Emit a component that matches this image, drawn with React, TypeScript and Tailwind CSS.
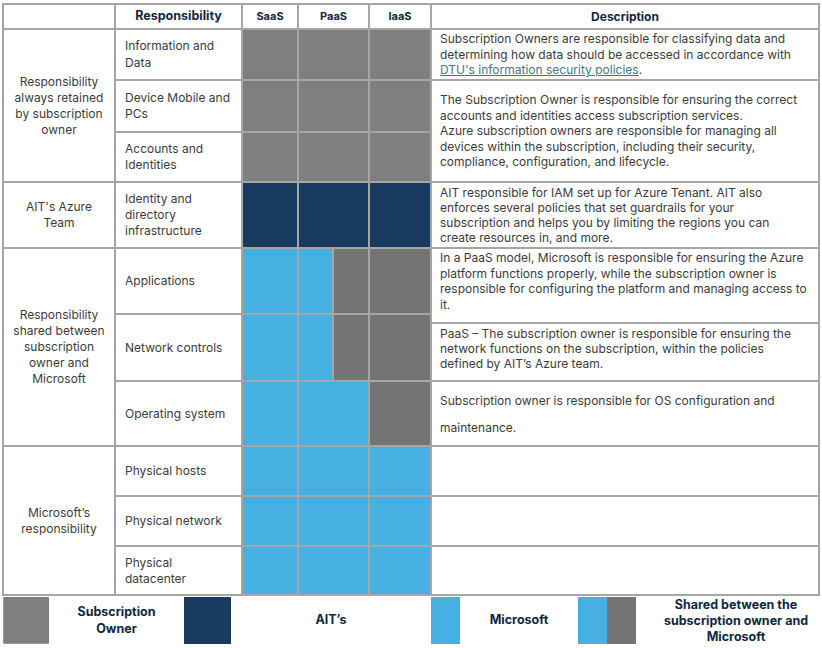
import React from "react";

const font = { fontFamily: "Inter, 'Liberation Sans', sans-serif" };

const txt = "text-[12px] text-[#3b3b3b]";
const head = "flex items-center justify-center bg-white font-bold text-[#0e2841]";

const Lines = ({ lines, className = "" }: { lines: React.ReactNode[]; className?: string }) => (
  <div className={className}>
    {lines.map((l, i) => (
      <div key={i} className="whitespace-nowrap">
        {l}
      </div>
    ))}
  </div>
);

export default function App() {
  return (
    <div className="w-[822px] h-[648px] bg-white" style={font}>
      <div className="ml-[2px] mt-[3px] grid w-[818px] grid-cols-[110px_125px_54px_69px_60px_386px] grid-rows-[23px_49px_50px_48px_64px_64px_7px_56px_63px_48px_48px_47px] gap-[2px] bg-[#a6a6a6] p-[2px]">
        {/* header */}
        <div className="col-start-1 row-start-1 bg-white" />
        <div className={`col-start-2 row-start-1 text-[12.5px] ${head}`}>Responsibility</div>
        <div className={`col-start-3 row-start-1 text-[11px] ${head}`}>SaaS</div>
        <div className={`col-start-4 row-start-1 text-[11px] ${head}`}>PaaS</div>
        <div className={`col-start-5 row-start-1 text-[11px] ${head}`}>IaaS</div>
        <div className={`col-start-6 row-start-1 text-[12px] ${head}`}>Description</div>

        {/* column 1 groups */}
        <div className={`col-start-1 row-start-2 row-span-3 flex items-center justify-center bg-white text-center leading-[16px] ${txt}`}>
          <Lines lines={["Responsibility", "always retained", "by subscription", "owner"]} />
        </div>
        <div className={`col-start-1 row-start-5 flex items-center justify-center bg-white text-center leading-[16px] ${txt}`}>
          <Lines lines={["AIT's Azure", "Team"]} />
        </div>
        <div className={`col-start-1 row-start-6 row-span-4 flex items-center justify-center bg-white text-center leading-[16px] ${txt}`}>
          <Lines lines={["Responsibility", "shared between", "subscription", "owner and", "Microsoft"]} />
        </div>
        <div className={`col-start-1 row-start-10 row-span-3 flex items-center justify-center bg-white text-center leading-[16px] ${txt}`}>
          <Lines lines={["Microsoft’s", "responsibility"]} />
        </div>

        {/* column 2 */}
        <div className={`col-start-2 row-start-2 flex items-center bg-white pl-[9px] leading-[16.5px] ${txt}`}>
          <Lines lines={["Information and", "Data"]} />
        </div>
        <div className={`col-start-2 row-start-3 flex items-center bg-white pl-[9px] leading-[16.5px] ${txt}`}>
          <Lines lines={["Device Mobile and", "PCs"]} />
        </div>
        <div className={`col-start-2 row-start-4 flex items-center bg-white pl-[9px] leading-[16px] ${txt}`}>
          <Lines lines={["Accounts and", "Identities"]} />
        </div>
        <div className={`col-start-2 row-start-5 flex items-center bg-white pl-[9px] leading-[16px] ${txt}`}>
          <Lines lines={["Identity and", "directory", "infrastructure"]} />
        </div>
        <div className={`col-start-2 row-start-6 flex items-center bg-white pl-[9px] ${txt}`}>Applications</div>
        <div className={`col-start-2 row-start-7 row-span-2 flex items-center bg-white pl-[9px] ${txt}`}>Network controls</div>
        <div className={`col-start-2 row-start-9 flex items-center bg-white pl-[9px] ${txt}`}>Operating system</div>
        <div className={`col-start-2 row-start-10 flex items-center bg-white pl-[9px] ${txt}`}>Physical hosts</div>
        <div className={`col-start-2 row-start-11 flex items-center bg-white pl-[9px] ${txt}`}>Physical network</div>
        <div className={`col-start-2 row-start-12 flex items-center bg-white pl-[9px] leading-[16px] ${txt}`}>
          <Lines lines={["Physical", "datacenter"]} />
        </div>

        {/* SaaS / PaaS / IaaS */}
        <div className="col-start-3 row-start-2 bg-[#7f7f7f]" />
        <div className="col-start-4 row-start-2 bg-[#7f7f7f]" />
        <div className="col-start-5 row-start-2 bg-[#7f7f7f]" />
        <div className="col-start-3 row-start-3 bg-[#7f7f7f]" />
        <div className="col-start-4 row-start-3 bg-[#7f7f7f]" />
        <div className="col-start-5 row-start-3 bg-[#7f7f7f]" />
        <div className="col-start-3 row-start-4 bg-[#7f7f7f]" />
        <div className="col-start-4 row-start-4 bg-[#7f7f7f]" />
        <div className="col-start-5 row-start-4 bg-[#7f7f7f]" />

        <div className="col-start-3 row-start-5 bg-[#173a5e]" />
        <div className="col-start-4 row-start-5 bg-[#173a5e]" />
        <div className="col-start-5 row-start-5 bg-[#173a5e]" />

        <div className="col-start-3 row-start-6 bg-[#45b0e1]" />
        <div className="col-start-4 row-start-6 flex gap-[2px]">
          <div className="w-[33px] bg-[#45b0e1]" />
          <div className="flex-1 bg-[#747474]" />
        </div>
        <div className="col-start-5 row-start-6 bg-[#747474]" />

        <div className="col-start-3 row-start-7 row-span-2 bg-[#45b0e1]" />
        <div className="col-start-4 row-start-7 row-span-2 flex gap-[2px]">
          <div className="w-[33px] bg-[#45b0e1]" />
          <div className="flex-1 bg-[#747474]" />
        </div>
        <div className="col-start-5 row-start-7 row-span-2 bg-[#747474]" />

        <div className="col-start-3 row-start-9 bg-[#45b0e1]" />
        <div className="col-start-4 row-start-9 bg-[#45b0e1]" />
        <div className="col-start-5 row-start-9 bg-[#747474]" />

        {[10, 11, 12].map((r) => (
          <React.Fragment key={r}>
            <div className="col-start-3 bg-[#45b0e1]" style={{ gridRowStart: r }} />
            <div className="col-start-4 bg-[#45b0e1]" style={{ gridRowStart: r }} />
            <div className="col-start-5 bg-[#45b0e1]" style={{ gridRowStart: r }} />
          </React.Fragment>
        ))}

        {/* descriptions */}
        <div className={`col-start-6 row-start-2 flex items-center bg-white pl-[8px] leading-[15.5px] ${txt}`}>
          <Lines
            lines={[
              "Subscription Owners are responsible for classifying data and",
              "determining how data should be accessed in accordance with",
              <>
                <span className="text-[#467886] underline">DTU's information security policies</span>.
              </>,
            ]}
          />
        </div>
        <div className={`col-start-6 row-start-3 row-span-2 flex items-center bg-white pl-[8px] leading-[15.5px] ${txt}`}>
          <Lines
            lines={[
              "The Subscription Owner is responsible for ensuring the correct",
              "accounts and identities access subscription services.",
              "Azure subscription owners are responsible for managing all",
              "devices within the subscription, including their security,",
              "compliance, configuration, and lifecycle.",
            ]}
          />
        </div>
        <div className={`col-start-6 row-start-5 flex items-center bg-white pl-[8px] leading-[15px] ${txt}`}>
          <Lines
            lines={[
              "AIT responsible for IAM set up for Azure Tenant. AIT also",
              "enforces several policies that set guardrails for your",
              "subscription and helps you by limiting the regions you can",
              "create resources in, and more.",
            ]}
          />
        </div>
        <div className={`col-start-6 row-start-6 row-span-2 bg-white pl-[8px] pt-[1px] leading-[15.5px] ${txt}`}>
          <Lines
            lines={[
              "In a PaaS model, Microsoft is responsible for ensuring the Azure",
              "platform functions properly, while the subscription owner is",
              "responsible for configuring the platform and managing access to",
              "it.",
            ]}
          />
        </div>
        <div className={`col-start-6 row-start-8 bg-white pl-[8px] pt-[2px] leading-[15px] ${txt}`}>
          <Lines
            lines={[
              "PaaS – The subscription owner is responsible for ensuring the",
              "network functions on the subscription, within the policies",
              "defined by AIT’s Azure team.",
            ]}
          />
        </div>
        <div className={`col-start-6 row-start-9 flex items-center bg-white pl-[8px] leading-[27px] ${txt}`}>
          <Lines lines={["Subscription owner is responsible for OS configuration and", "maintenance."]} />
        </div>
        <div className="col-start-6 row-start-10 bg-white" />
        <div className="col-start-6 row-start-11 bg-white" />
        <div className="col-start-6 row-start-12 bg-white" />
      </div>

      {/* legend */}
      <div className="ml-[3px] mt-[1px] flex h-[47px] text-[12.5px] font-bold leading-[16.5px] text-[#0e2841]">
        <div className="w-[46px] border-b border-l border-dotted border-[#b5b5b5] bg-[#7f7f7f]" />
        <div className="flex w-[135px] items-center justify-center text-center">
          <Lines lines={["Subscription", "Owner"]} />
        </div>
        <div className="w-[47px] bg-[#173a5e]" />
        <div className="flex w-[200px] items-center justify-center">AIT’s</div>
        <div className="w-[29px] bg-[#45b0e1]" />
        <div className="flex w-[118px] items-center justify-center">Microsoft</div>
        <div className="w-[29px] bg-[#45b0e1]" />
        <div className="w-[29px] bg-[#747474]" />
        <div className="flex w-[182px] items-center justify-center pl-[18px] text-center leading-[16px]">
          <Lines lines={["Shared between the", "subscription owner and", "Microsoft"]} />
        </div>
      </div>
    </div>
  );
}
